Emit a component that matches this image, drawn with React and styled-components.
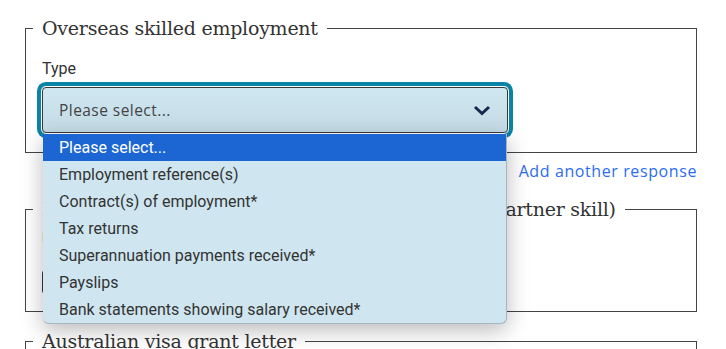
import React from "react";
import styled, { createGlobalStyle } from "styled-components";

const GlobalStyle = createGlobalStyle`
  html, body {
    margin: 0;
    padding: 0;
    background: #fff;
  }
  body {
    font-family: Roboto, "Liberation Sans", sans-serif;
    color: #333;
    overflow: hidden;
  }
`;

const Page = styled.div`
  width: 726px;
  height: 349px;
  box-sizing: border-box;
  padding: 15px 29px 0 25px;
  overflow: hidden;
`;

const Group = styled.fieldset`
  margin: 0;
  min-width: 0;
  padding: 0 16px ${(p) => p.$bottom || 19}px;
  border: 1px solid #444;
`;

const Legend = styled.legend`
  margin-left: -9px;
  padding: 0 9px;
  font-family: "DejaVu Serif", "Liberation Serif", serif;
  font-size: 19px;
  letter-spacing: -0.25px;
  line-height: 26px;
  color: #333;
  white-space: nowrap;
`;

const Label = styled.label`
  display: block;
  margin-top: ${(p) => p.$top || 18}px;
  font-size: 16px;
  line-height: 20px;
  color: #333;
`;

const SelectWrap = styled.div`
  position: relative;
  width: 466px;
  margin-top: 8px;
`;

const SelectBox = styled.div`
  box-sizing: border-box;
  height: 46px;
  display: flex;
  align-items: center;
  justify-content: space-between;
  padding: 0 16px;
  border: 1px solid #3a3a3a;
  border-radius: 4px;
  background: linear-gradient(#cfe7f1, #c4dbe5);
  font-family: "Open Sans", "Liberation Sans", sans-serif;
  font-size: 15.5px;
  letter-spacing: 0.45px;
  color: #444;
  box-shadow: 0 0 0 1px #fff, 0 0 0 5px #0a84a6;
`;

const FileInput = styled.div`
  box-sizing: border-box;
  width: 300px;
  height: 24px;
  margin-top: 20px;
  border: 1px solid #3a3a3a;
  border-radius: 3px;
  background: #f4f4f4;
`;

const Chevron = () => (
  <svg width="18" height="12" viewBox="0 0 18 12">
    <path d="M2 3 L9 9.5 L16 3" fill="none" stroke="#17284f" strokeWidth="3" />
  </svg>
);

const Menu = styled.ul`
  position: absolute;
  left: 1px;
  right: 1px;
  top: 47px;
  margin: 0;
  padding: 0;
  list-style: none;
  background: #cfe6f0;
  border-right: 1px solid #a7b7be;
  border-bottom: 1px solid #a7b7be;
  border-radius: 0 0 6px 6px;
  box-shadow: 0 6px 22px rgba(0, 0, 0, 0.28);
  z-index: 5;
`;

const Option = styled.li`
  height: 27px;
  line-height: 27px;
  padding-left: 16px;
  font-size: 16px;
  color: ${(p) => (p.$active ? "#fff" : "#333")};
  background: ${(p) => (p.$active ? "#1b66d2" : "transparent")};
`;

const AddRow = styled.div`
  display: flex;
  justify-content: flex-end;
  margin: 8px 0 15px;
`;

const AddLink = styled.a`
  font-family: "Open Sans", "Liberation Sans", sans-serif;
  font-size: 16px;
  letter-spacing: 0.6px;
  line-height: 20px;
  color: #2d6cf0;
  text-decoration: none;
`;

const NextGroup = styled(Group)`
  margin-top: 16px;
`;

const options = [
  "Please select...",
  "Employment reference(s)",
  "Contract(s) of employment*",
  "Tax returns",
  "Superannuation payments received*",
  "Payslips",
  "Bank statements showing salary received*",
];

export default function App() {
  return (
    <>
      <GlobalStyle />
      <Page>
        <Group>
          <Legend>Overseas skilled employment</Legend>
          <Label>Type</Label>
          <SelectWrap>
            <SelectBox>
              <span>Please select...</span>
              <Chevron />
            </SelectBox>
            <Menu>
              {options.map((o, i) => (
                <Option key={o} $active={i === 0}>
                  {o}
                </Option>
              ))}
            </Menu>
          </SelectWrap>
        </Group>
        <AddRow>
          <AddLink href="#">Add another response</AddLink>
        </AddRow>
        <Group $bottom={17}>
          <Legend>Evidence of your partner's skilled employment (partner skill)</Legend>
          <Label $top={8}>Upload document</Label>
          <FileInput />
        </Group>
        <NextGroup>
          <Legend>Australian visa grant letter</Legend>
        </NextGroup>
      </Page>
    </>
  );
}
